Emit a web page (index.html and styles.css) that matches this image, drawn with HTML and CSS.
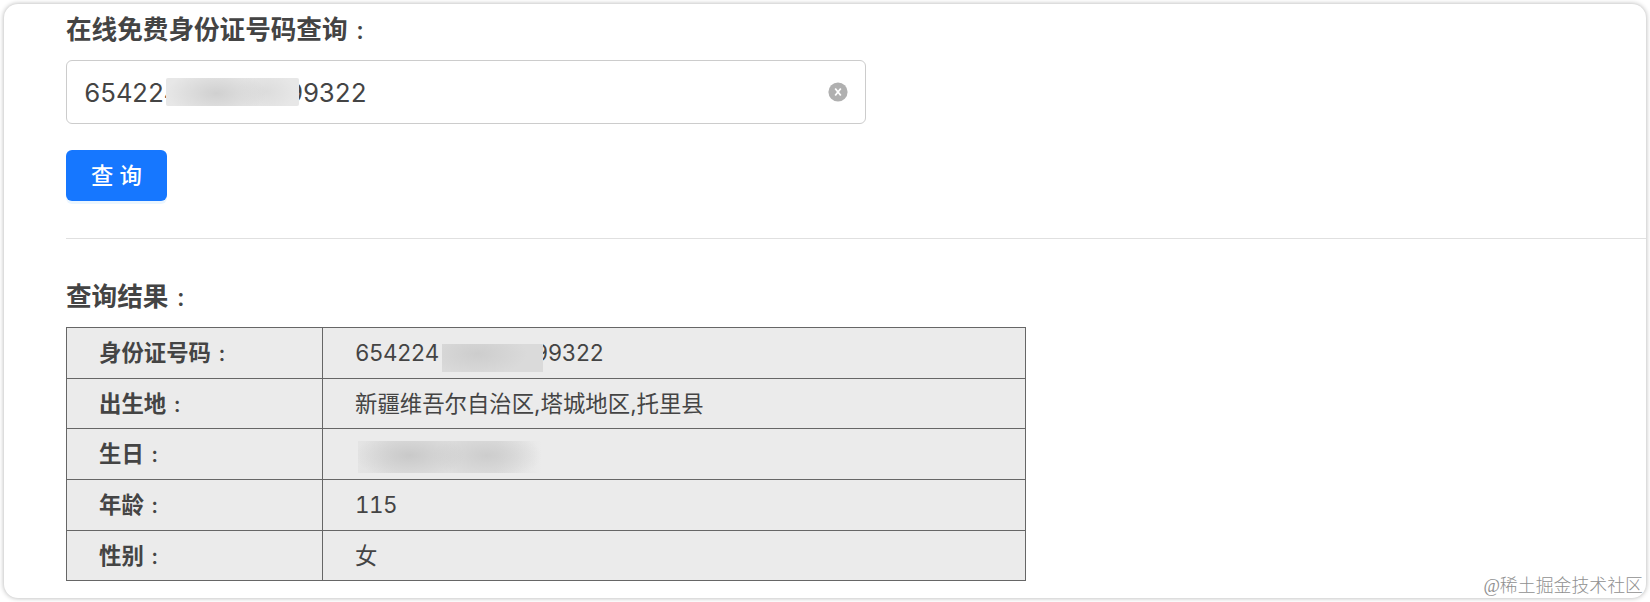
FILE: index.html
```html
<!DOCTYPE html>
<html lang="zh-CN">
  <head>
    <meta charset="UTF-8" />
    <meta name="viewport" content="width=device-width, initial-scale=1.0" />
    <title>身份证号码查询</title>
    <link rel="stylesheet" href="styles.css">
  </head>
  <body>
    <div class="card">
      <div class="search">
        <h3>在线免费身份证号码查询<span class="colon">：</span></h3>
        <div class="input-box">
          <div class="input-text num">654224<span class="mask mask-input"></span>99322</div>
          <svg class="clear-icon" viewBox="0 0 20 20">
            <circle cx="10" cy="10" r="9.6" fill="#b0b0b0" />
            <path d="M7.2 6.5L12.8 13.5M12.8 6.5L7.2 13.5" stroke="#fff" stroke-width="1.8" />
          </svg>
        </div>
        <button type="button" class="btn">查 询</button>
      </div>

      <!-- 查询结果 -->
      <div class="result">
        <h3>查询结果<span class="colon">：</span></h3>
        <table>
          <tr>
            <th>身份证号码<span class="colon">：</span></th>
            <td class="num">654224<span class="mask mask-id"></span>99322</td>
          </tr>
          <tr class="short">
            <th>出生地<span class="colon">：</span></th>
            <td>新疆维吾尔自治区,塔城地区,托里县</td>
          </tr>
          <tr>
            <th>生日<span class="colon">：</span></th>
            <td><span class="mask mask-birthday"></span></td>
          </tr>
          <tr>
            <th>年龄<span class="colon">：</span></th>
            <td class="num">115</td>
          </tr>
          <tr class="short">
            <th>性别<span class="colon">：</span></th>
            <td>女</td>
          </tr>
        </table>
      </div>
      <span class="watermark">@稀土掘金技术社区</span>
    </div>
  </body>
</html>
```
FILE: styles.css
```css
* {
  margin: 0;
  padding: 0;
  box-sizing: border-box;
}
body {
  height: 100vh;
  padding: 4px;
  background-color: #fff;
  color: #444;
  font-family: Inter, "Noto Sans CJK SC", sans-serif;
  overflow: hidden;
}
.card {
  position: relative;
  height: 594px;
  padding-left: 62px;
  border-radius: 14px;
  background-color: #fff;
  box-shadow: 0 0 5px rgba(0, 0, 0, 0.32);
}
h3 {
  font-size: 25.6px;
  line-height: 38px;
  font-weight: 700;
}
.colon {
  margin-left: 0.4em;
  font-size: 0.75em;
  line-height: 1;
}
.num {
  font-variant-numeric: tabular-nums;
  letter-spacing: -0.025em;
}
/* ===查询=== */
.search {
  height: 235px;
  padding-top: 7px;
  border-bottom: 1px solid #e0e0e0;
}
.input-box {
  display: flex;
  align-items: center;
  justify-content: space-between;
  width: 800px;
  height: 64px;
  margin-top: 11px;
  padding: 0 17px;
  border: 1px solid #ccc;
  border-radius: 6px;
}
.input-text {
  padding-top: 2px;
  font-size: 25.6px;
  line-height: 36px;
}
.clear-icon {
  width: 20px;
  height: 20px;
}
.btn {
  display: block;
  width: 101px;
  height: 51px;
  margin-top: 26px;
  padding-bottom: 4px;
  border: none;
  border-radius: 6px;
  background-color: #1677ff;
  box-shadow: 0 3px 0 rgba(5, 145, 255, 0.08);
  color: #fff;
  font-family: inherit;
  font-size: 22.4px;
  font-weight: 500;
  cursor: pointer;
}
/* ===结果=== */
.result {
  padding-top: 39px;
}
table {
  width: 960px;
  margin-top: 11px;
  border-collapse: collapse;
  table-layout: fixed;
  background-color: #ebebeb;
}
tr {
  height: 51px;
}
.short {
  height: 50px;
}
th,
td {
  padding: 0 32px;
  border: 1px solid #666;
  font-size: 22.4px;
  line-height: 32px;
  text-align: left;
}
th {
  width: 256px;
}
/* 打码 */
.mask {
  position: relative;
  display: inline-block;
  vertical-align: middle;
}
.mask-input {
  top: -3px;
  width: 133px;
  height: 28px;
  margin: 0 -12px 0 -14px;
  border-radius: 2px;
  background: radial-gradient(50px 24px at 38% 55%, #d0d0d0, transparent),
    radial-gradient(30px 20px at 75% 50%, #dcdcdc, transparent), #e7e7e7;
}
.mask-id {
  top: 3px;
  width: 101px;
  height: 28px;
  margin: 0 -9px 0 3px;
  background: radial-gradient(50px 22px at 35% 35%, #cdcdcd, transparent), #dadada;
}
.mask-birthday {
  top: 2px;
  width: 184px;
  height: 32px;
  margin-left: 3px;
  background: radial-gradient(55px 24px at 28% 45%, #c9c9c9, transparent),
    radial-gradient(55px 24px at 70% 45%, #cdcdcd, transparent),
    linear-gradient(to right, #e4e4e4, #dedede 20%, #dedede 75%, #ebebeb);
}
.watermark {
  position: absolute;
  right: 3px;
  bottom: 0;
  color: #909090;
  font-family: "Liberation Serif", "Noto Sans CJK SC", serif;
  font-size: 17.9px;
  font-weight: 300;
  line-height: 24px;
}
```
